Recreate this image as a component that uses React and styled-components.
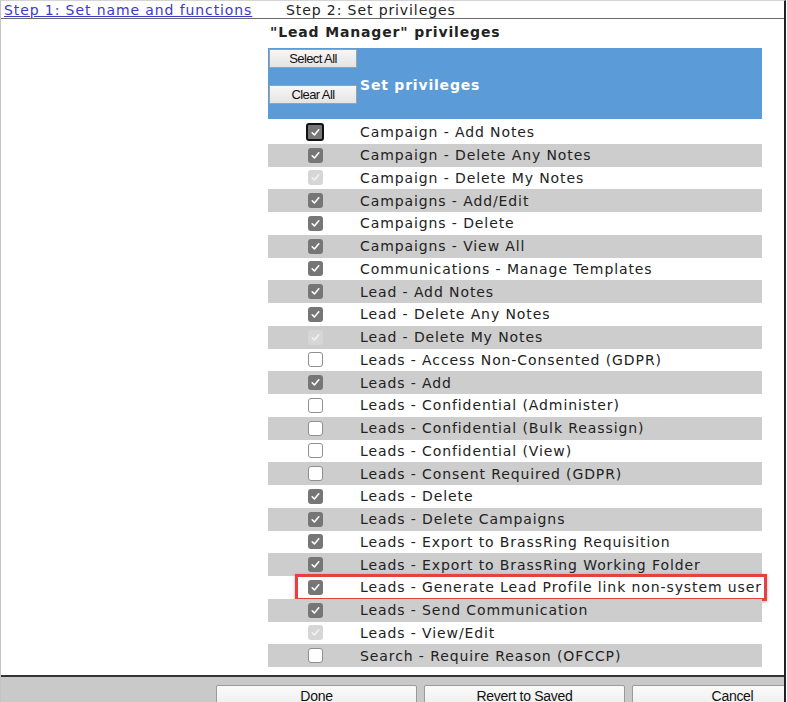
import React from 'react';
import styled, { createGlobalStyle } from 'styled-components';

const GlobalStyle = createGlobalStyle`
  html, body {
    margin: 0;
    padding: 0;
    background: #fff;
  }
  body {
    font-family: "DejaVu Sans", Verdana, sans-serif;
    color: #222;
  }
`;

const privileges = [
  { label: 'Campaign - Add Notes', state: 'focused' },
  { label: 'Campaign - Delete Any Notes', state: 'checked' },
  { label: 'Campaign - Delete My Notes', state: 'disabled' },
  { label: 'Campaigns - Add/Edit', state: 'checked' },
  { label: 'Campaigns - Delete', state: 'checked' },
  { label: 'Campaigns - View All', state: 'checked' },
  { label: 'Communications - Manage Templates', state: 'checked' },
  { label: 'Lead - Add Notes', state: 'checked' },
  { label: 'Lead - Delete Any Notes', state: 'checked' },
  { label: 'Lead - Delete My Notes', state: 'disabled' },
  { label: 'Leads - Access Non-Consented (GDPR)', state: 'unchecked' },
  { label: 'Leads - Add', state: 'checked' },
  { label: 'Leads - Confidential (Administer)', state: 'unchecked' },
  { label: 'Leads - Confidential (Bulk Reassign)', state: 'unchecked' },
  { label: 'Leads - Confidential (View)', state: 'unchecked' },
  { label: 'Leads - Consent Required (GDPR)', state: 'unchecked' },
  { label: 'Leads - Delete', state: 'checked' },
  { label: 'Leads - Delete Campaigns', state: 'checked' },
  { label: 'Leads - Export to BrassRing Requisition', state: 'checked' },
  { label: 'Leads - Export to BrassRing Working Folder', state: 'checked' },
  { label: 'Leads - Generate Lead Profile link non-system user', state: 'checked', highlight: true },
  { label: 'Leads - Send Communication', state: 'checked' },
  { label: 'Leads - View/Edit', state: 'disabled' },
  { label: 'Search - Require Reason (OFCCP)', state: 'unchecked' },
];

const CheckMark = ({ color }) => (
  <svg width="11" height="11" viewBox="0 0 11 11">
    <path d="M2.2 5.8 L4.4 8 L8.8 2.8" fill="none" stroke={color} strokeWidth="1.6" strokeLinecap="round" strokeLinejoin="round" />
  </svg>
);

const PrivilegeCheckbox = ({ state }) => {
  if (state === 'unchecked') return <Box $state={state} />;
  return (
    <Box $state={state}>
      <CheckMark color={state === 'disabled' ? '#f2f2f2' : '#fff'} />
    </Box>
  );
};

const App = () => {
  return (
    <>
      <GlobalStyle />
      <Page>
        <TabBar>
          <StepLink href="#">Step 1: Set name and functions</StepLink>
          <StepLabel>Step 2: Set privileges</StepLabel>
        </TabBar>
        <Main>
          <Panel>
            <Title>"Lead Manager" privileges</Title>
            <Header>
              <ButtonColumn>
                <SmallButton>Select All</SmallButton>
                <SmallButton>Clear All</SmallButton>
              </ButtonColumn>
              <HeaderTitle>Set privileges</HeaderTitle>
            </Header>
            <List>
              {privileges.map((p, i) => (
                <Row key={p.label} $alt={i % 2 === 1}>
                  <CheckCell>
                    <PrivilegeCheckbox state={p.state} />
                  </CheckCell>
                  <Label>{p.label}</Label>
                  {p.highlight && <Highlight />}
                </Row>
              ))}
            </List>
          </Panel>
        </Main>
        <Footer>
          <FooterButton>Done</FooterButton>
          <FooterButton>Revert to Saved</FooterButton>
          <FooterButton>Cancel</FooterButton>
        </Footer>
      </Page>
    </>
  );
};

const Page = styled.div`
  box-sizing: border-box;
  width: 786px;
  height: 702px;
  display: flex;
  flex-direction: column;
  overflow: hidden;
  border-left: 1px solid #c4c4c4;
  border-right: 2px solid #222;
  border-top: 1px solid #d4d4d4;
`;

const TabBar = styled.div`
  height: 17px;
  flex-shrink: 0;
  display: flex;
  align-items: center;
  padding-left: 3px;
  border-bottom: 1px solid #6a6a6a;
  font-size: 14px;
  letter-spacing: 0.9px;
`;

const StepLink = styled.a`
  color: #3b3bc6;
  text-decoration: underline;
  width: 282px;
  white-space: nowrap;
`;

const StepLabel = styled.span`
  color: #222;
  white-space: nowrap;
`;

const Main = styled.div`
  flex: 1;
  padding-left: 267px;
`;

const Panel = styled.div`
  width: 494px;
`;

const Title = styled.div`
  height: 29px;
  line-height: 26px;
  padding-left: 2px;
  font-size: 14px;
  font-weight: bold;
  letter-spacing: 0.85px;
  color: #222;
  white-space: nowrap;
`;

const Header = styled.div`
  height: 71px;
  background: #5b9bd7;
  display: flex;
  align-items: center;
`;

const ButtonColumn = styled.div`
  width: 90px;
  align-self: stretch;
  display: flex;
  flex-direction: column;
  gap: 17px;
  padding: 1px 0 0 1px;
  box-sizing: border-box;
`;

const SmallButton = styled.button`
  width: 88px;
  height: 19px;
  padding: 0;
  border: 1px solid #a0a0a0;
  background: linear-gradient(#f7f7f7, #e4e4e4);
  font-family: "Liberation Sans", Arial, sans-serif;
  font-size: 13px;
  letter-spacing: -0.6px;
  color: #111;
`;

const HeaderTitle = styled.div`
  margin-left: 2px;
  margin-top: 3px;
  color: #fff;
  font-size: 14px;
  font-weight: bold;
  letter-spacing: 0.8px;
`;

const List = styled.div`
  margin-top: 2px;
`;

const Row = styled.div`
  position: relative;
  height: 22.75px;
  display: flex;
  align-items: center;
  background: ${({ $alt }) => ($alt ? '#cdcdcd' : '#fff')};
`;

const CheckCell = styled.div`
  width: 92px;
  display: flex;
  justify-content: center;
  padding-left: 2px;
  box-sizing: border-box;
`;

const Box = styled.span`
  box-sizing: border-box;
  width: ${({ $state }) => ($state === 'focused' ? '18px' : '15px')};
  height: ${({ $state }) => ($state === 'focused' ? '18px' : '15px')};
  border-radius: 3px;
  display: flex;
  align-items: center;
  justify-content: center;
  background: ${({ $state }) =>
    $state === 'unchecked' ? '#fff' : $state === 'disabled' ? '#d6d6d6' : '#767676'};
  border: ${({ $state }) =>
    $state === 'focused'
      ? '2px solid #111'
      : $state === 'unchecked'
      ? '1px solid #8f8f8f'
      : 'none'};
`;

const Label = styled.span`
  font-size: 14px;
  letter-spacing: 0.9px;
  color: #222;
  white-space: nowrap;
`;

const Highlight = styled.div`
  position: absolute;
  left: 27px;
  right: -5px;
  top: -2px;
  bottom: -2px;
  border: 3px solid #e8403f;
  box-shadow: 0 1px 3px rgba(0, 0, 0, 0.3);
  pointer-events: none;
`;

const Footer = styled.div`
  height: 27px;
  flex-shrink: 0;
  display: flex;
  gap: 7px;
  padding: 8px 0 0 215px;
  box-sizing: border-box;
  border-top: 2px solid #333;
  background: #c9c9c9;
`;

const FooterButton = styled.button`
  flex-shrink: 0;
  width: 201px;
  height: 26px;
  padding: 2px 0 0;
  border: 1px solid #9a9a9a;
  border-radius: 2px;
  background: linear-gradient(#fafafa, #ececec);
  font-family: "Liberation Sans", Arial, sans-serif;
  font-size: 14px;
  letter-spacing: -0.3px;
  color: #111;
  align-self: flex-start;
  display: flex;
  justify-content: center;
`;

export default App;
